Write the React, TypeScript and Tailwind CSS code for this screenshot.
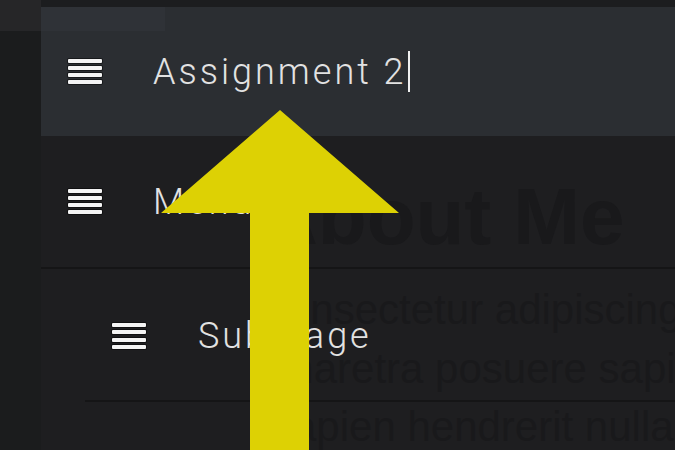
import React from "react";

function Burger() {
  return (
    <div className="flex w-[34px] flex-col gap-[3.33px]">
      {[0, 1, 2, 3].map((i) => (
        <div
          key={i}
          className="h-[4px] w-full rounded-[1px] bg-[#f4f4f4] shadow-[0_0_0_1px_rgba(0,0,0,0.45)]"
        />
      ))}
    </div>
  );
}

const labelCls =
  "text-[36px] leading-none font-light tracking-[3px] text-[#e2e2e2] whitespace-nowrap [font-family:Roboto,'Liberation_Sans',sans-serif]";

export default function App() {
  return (
    <div className="relative h-[450px] w-[675px] overflow-hidden bg-[#1e1e20]">
      {/* page content underneath the menu */}
      <div className="absolute left-[262px] top-[177px] flex flex-col whitespace-nowrap text-[#19191b] [font-family:'Liberation_Sans',Arial,sans-serif]">
        <div className="ml-[-2px] text-[80px] font-bold leading-[80px]">About Me</div>
        <div className="mt-[24px] flex flex-col text-[42px] leading-[58.5px]">
          <div className="ml-[4px]">consectetur adipiscing elit</div>
          <div className="ml-[5px]">pharetra posuere sapien</div>
          <div className="ml-[10px]">sapien hendrerit nulla</div>
        </div>
      </div>

      {/* menu layer */}
      <div className="relative flex h-full">
        <div className="flex w-[41px] flex-col">
          <div className="h-[31px] bg-[#262628]" />
          <div className="flex-1 bg-[#1b1c1d]" />
        </div>
        <div className="flex flex-1 flex-col">
          <div className="h-[7px] bg-[#1c1d1f]" />
          <div className="relative flex h-[129px] items-center bg-[#2b2e32]">
            <div className="absolute left-0 top-0 h-[24px] w-[124px] bg-[#2f3237]" />
            <div className="relative ml-[27px] flex items-center">
              <Burger />
              <div className="ml-[51px] flex items-center">
                <span className={labelCls}>Assignment 2</span>
                <span className="ml-[1px] h-[41px] w-[2px] bg-[#f0f0f0]" />
              </div>
            </div>
          </div>
          <div className="flex h-[133px] items-center border-b-2 border-[#151516]">
            <div className="ml-[27px] flex items-center">
              <Burger />
              <span className={"ml-[51px] " + labelCls}>Menu</span>
            </div>
          </div>
          <div className="ml-[44px] flex h-[133px] items-center border-b-2 border-[#151516]">
            <div className="ml-[27px] mt-[3px] flex items-center">
              <Burger />
              <span className={"ml-[52px] " + labelCls}>Sub Page</span>
            </div>
          </div>
        </div>
      </div>

      {/* yellow arrow */}
      <svg
        className="pointer-events-none absolute left-0 top-0"
        width="675"
        height="450"
        viewBox="0 0 675 450"
      >
        <polygon
          points="280,110 399,213 309,213 309,450 250,450 250,213 161,213"
          fill="#ddd104"
        />
      </svg>
    </div>
  );
}
